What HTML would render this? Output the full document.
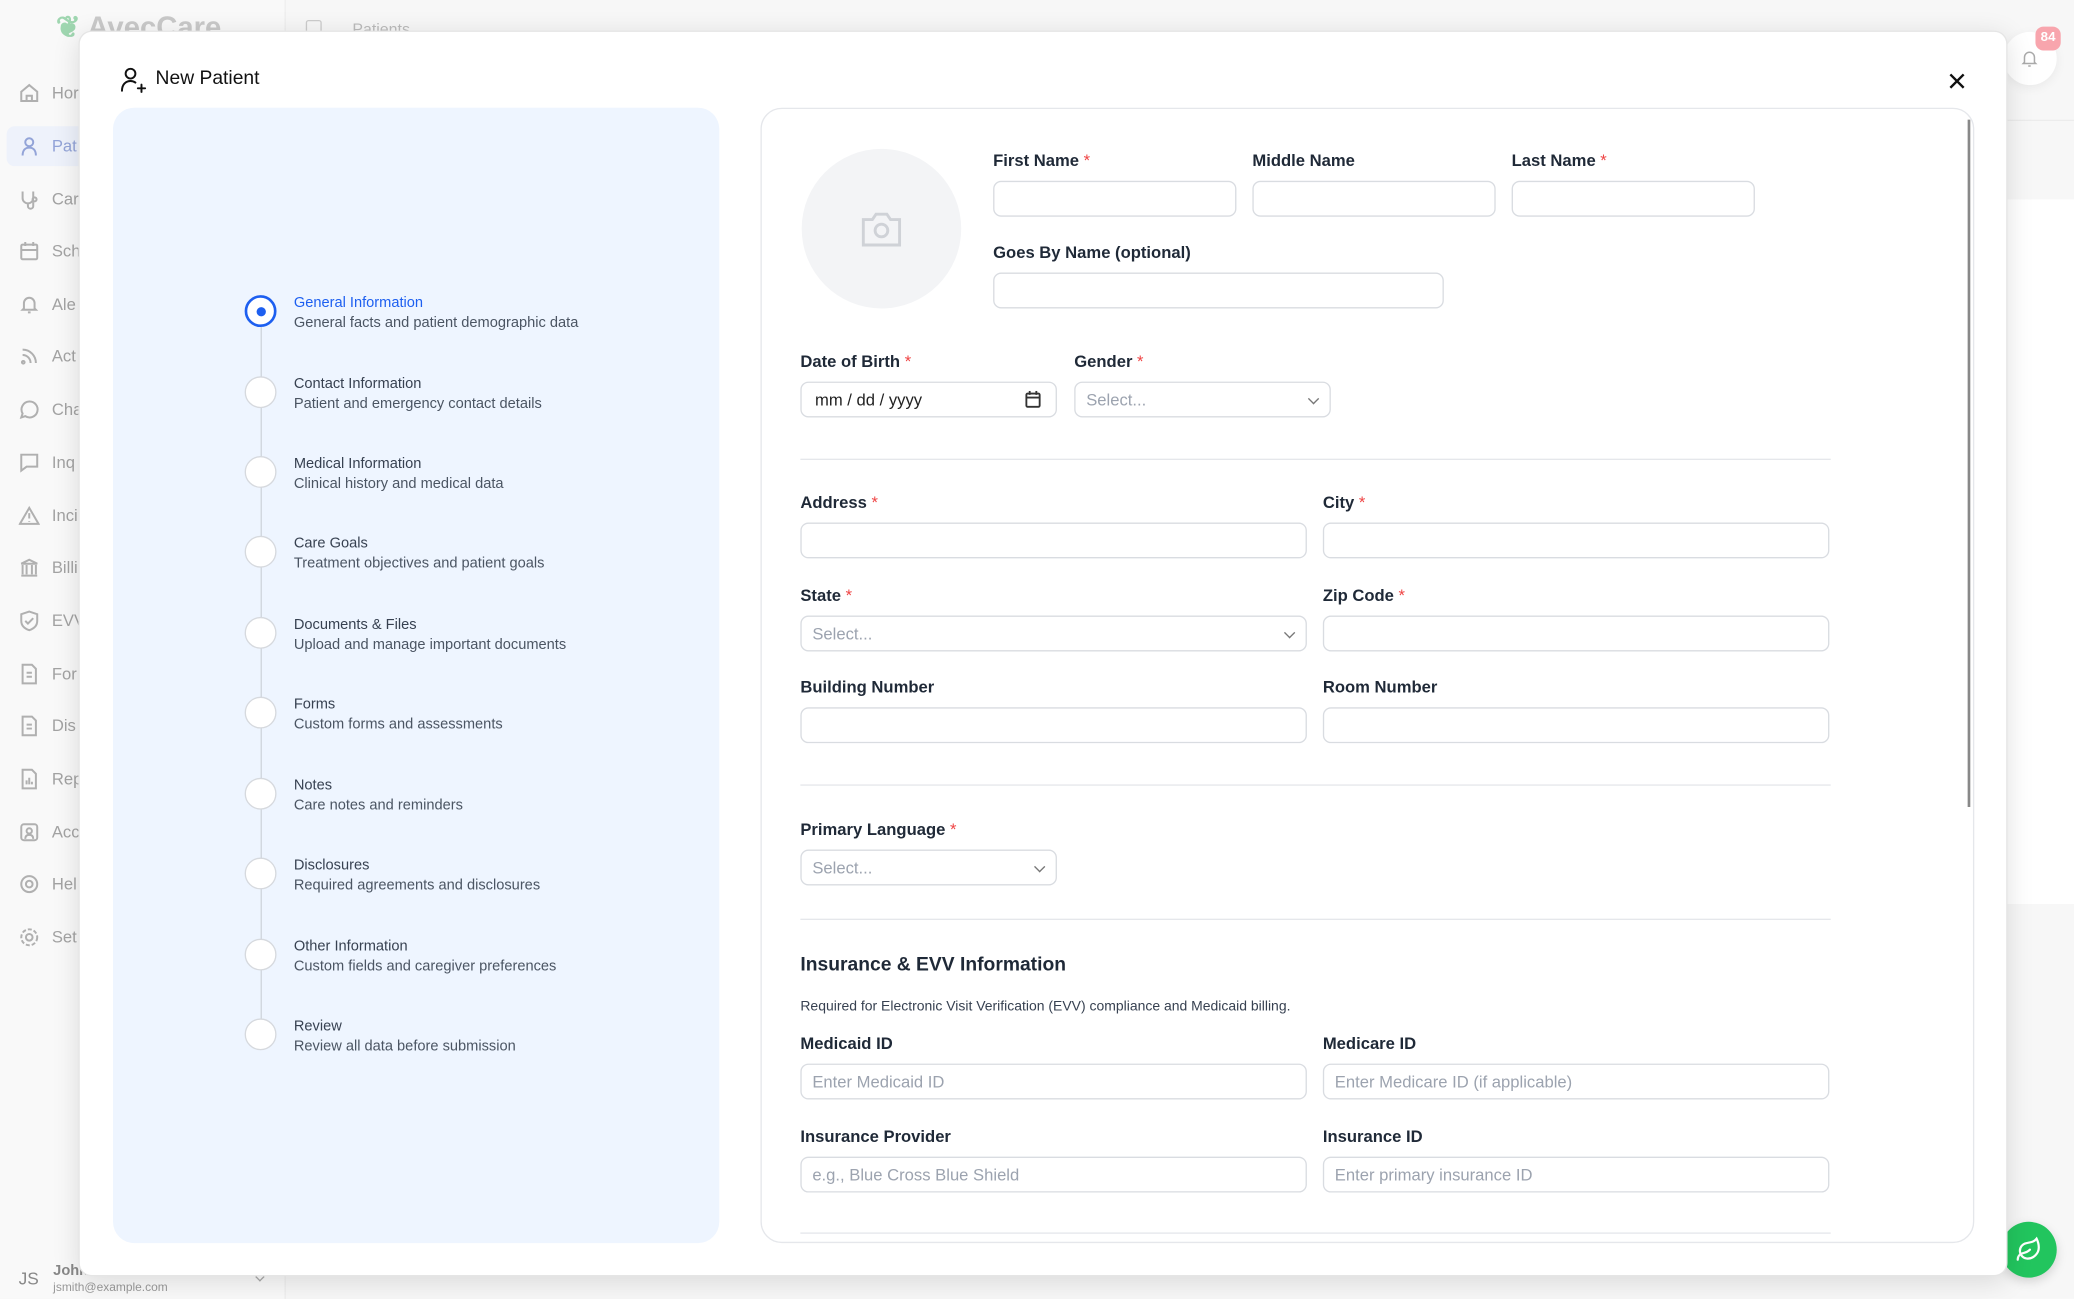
<!DOCTYPE html>
<html><head><meta charset="utf-8"><style>
*{box-sizing:border-box;margin:0;padding:0}
html,body{width:2074px;height:1298px;overflow:hidden;background:#fff}
#s{position:absolute;left:0;top:0;width:1560px;height:977px;transform:scale(1.32949);transform-origin:0 0;font-family:"Liberation Sans",sans-serif;background:#f7f7f7;color:#111}
.a{position:absolute}
.nav{position:absolute;left:14px;font-size:12.5px;color:#a3a3a3;display:flex;align-items:center;gap:9px}
.nav svg{width:16px;height:16px;stroke:#b0b0b0;fill:none;stroke-width:1.5}
.lbl{position:absolute;font-size:12.5px;font-weight:bold;color:#1f2937}
.lbl b{color:#ef4444;font-weight:normal}
.in{position:absolute;height:27px;border:1px solid #d9dce1;border-radius:6px;background:#fff;font-size:12.5px;color:#9ca3af;padding:6px 8px}
.hr{position:absolute;left:602px;width:775px;height:1px;background:#e5e7eb}
.st{position:absolute;left:184px;width:24px;height:24px;border-radius:50%;background:#fff;border:1.5px solid #d6d9de}
.stt{position:absolute;left:221px;font-size:11px;color:#374151;line-height:15px}
.stt span{display:block;color:#4b5563}
.chev{position:absolute;right:9px;top:9px;width:6px;height:6px;border-right:1.2px solid #777;border-bottom:1.2px solid #777;transform:rotate(45deg)}
</style></head><body><div id="s">
<!-- sidebar -->
<div class="a" style="left:0;top:0;width:215px;height:977px;background:#f9f9f9;border-right:1px solid #eee"></div>
<div class="a" style="left:42px;top:8px;font-size:22px;color:#c9c9c9;font-weight:bold"><span style="color:#9fd6b0">❦</span> AvecCare</div>
<div class="a" style="left:230px;top:15px;width:12px;height:12px;border:1.3px solid #ccc;border-radius:2px"></div>
<div class="a" style="left:265px;top:15px;font-size:12px;color:#bbb">Patients</div>
<div class="a" style="left:5px;top:95px;width:60px;height:30px;background:#eef2fb;border-radius:6px"></div>
<div class="nav" style="top:62px"><svg viewBox="0 0 16 16"><path d="M2 7l6-5 6 5v7H2z M6 14v-4h4v4"/></svg>Hor</div>
<div class="nav" style="top:102px;color:#93a4d8"><svg viewBox="0 0 16 16" style="stroke:#93a4d8"><circle cx="8" cy="5" r="3"/><path d="M3 15c0-4 2-6 5-6s5 2 5 6"/></svg>Pat</div>
<div class="nav" style="top:142px"><svg viewBox="0 0 16 16"><path d="M3 2v5a4 4 0 008 0V2M7 11v2a2 2 0 004 0v-3"/><circle cx="12" cy="8" r="1.5"/></svg>Car</div>
<div class="nav" style="top:181px"><svg viewBox="0 0 16 16"><rect x="2" y="3" width="12" height="11" rx="1"/><path d="M2 7h12M5 1v3M11 1v3"/></svg>Sch</div>
<div class="nav" style="top:221px"><svg viewBox="0 0 16 16"><path d="M4 11V7a4 4 0 018 0v4l1 1H3zM7 14h2"/></svg>Ale</div>
<div class="nav" style="top:260px"><svg viewBox="0 0 16 16"><path d="M3 3a10 10 0 0110 10M3 7a6 6 0 016 6"/><circle cx="3.5" cy="12.5" r="1"/></svg>Act</div>
<div class="nav" style="top:300px"><svg viewBox="0 0 16 16"><path d="M8 2a6 6 0 00-5 9l-1 3 3-1a6 6 0 103-11z"/></svg>Cha</div>
<div class="nav" style="top:340px"><svg viewBox="0 0 16 16"><path d="M2 2h12v9H6l-4 3z"/></svg>Inq</div>
<div class="nav" style="top:380px"><svg viewBox="0 0 16 16"><path d="M8 2l7 12H1zM8 6v4M8 12v.5"/></svg>Inci</div>
<div class="nav" style="top:419px"><svg viewBox="0 0 16 16"><path d="M2 5l6-3 6 3zM3 6v7M6 6v7M10 6v7M13 6v7M2 14h12"/></svg>Billi</div>
<div class="nav" style="top:459px"><svg viewBox="0 0 16 16"><path d="M8 1l6 2v5c0 4-3 6-6 7-3-1-6-3-6-7V3zM5 8l2 2 4-4"/></svg>EVV</div>
<div class="nav" style="top:499px"><svg viewBox="0 0 16 16"><path d="M3 1h7l3 3v11H3zM6 7h4M6 10h4"/></svg>For</div>
<div class="nav" style="top:538px"><svg viewBox="0 0 16 16"><path d="M3 1h7l3 3v11H3zM6 7h4M6 10h4"/></svg>Dis</div>
<div class="nav" style="top:578px"><svg viewBox="0 0 16 16"><path d="M3 1h7l3 3v11H3zM6 12V9M8 12V7M10 12v-2"/></svg>Rep</div>
<div class="nav" style="top:618px"><svg viewBox="0 0 16 16"><rect x="2" y="2" width="12" height="12" rx="2"/><circle cx="8" cy="7" r="2"/><path d="M5 13c0-2 1-3 3-3s3 1 3 3"/></svg>Acc</div>
<div class="nav" style="top:657px"><svg viewBox="0 0 16 16"><circle cx="8" cy="8" r="6"/><circle cx="8" cy="8" r="2.5"/></svg>Hel</div>
<div class="nav" style="top:697px"><svg viewBox="0 0 16 16"><circle cx="8" cy="8" r="2.5"/><circle cx="8" cy="8" r="6" stroke-dasharray="3 1.5"/></svg>Set</div>
<div class="a" style="left:14px;top:954px;font-size:13px;color:#888">JS</div>
<div class="a" style="left:40px;top:950px;font-size:11px;color:#888;font-weight:bold">John Smith</div>
<div class="a" style="left:40px;top:963px;font-size:9px;color:#999">jsmith@example.com</div>
<div class="a" style="left:193px;top:958px;width:5px;height:5px;border-right:1px solid #aaa;border-bottom:1px solid #aaa;transform:rotate(45deg)"></div>
<!-- right bg -->
<div class="a" style="left:1510px;top:90px;width:50px;height:1px;background:#ececec"></div>
<div class="a" style="left:1510px;top:150px;width:50px;height:530px;background:#fff"></div>
<div class="a" style="left:1507px;top:24px;width:40px;height:40px;border-radius:50%;background:#fff;box-shadow:0 2px 8px rgba(0,0,0,.06)"></div>
<svg class="a" style="left:1519px;top:36px" width="15" height="16" viewBox="0 0 16 16" fill="none" stroke="#aaa" stroke-width="1.2"><path d="M4 11V7a4 4 0 018 0v4l1 1H3zM7 14h2"/></svg>
<div class="a" style="left:1531px;top:20px;width:19px;height:18px;border-radius:6px;background:#f8a5ad;color:#fff;font-size:10px;font-weight:bold;text-align:center;line-height:18px">84</div>
<div class="a" style="left:1505px;top:919px;width:42px;height:42px;border-radius:50%;background:#22c55e;box-shadow:0 3px 8px rgba(0,0,0,.15)"></div>
<svg class="a" style="left:1516px;top:930px" width="20" height="20" viewBox="0 0 24 24" fill="none" stroke="#fff" stroke-width="2" stroke-linecap="round"><path d="M11 20A7 7 0 019.8 6.1C15.5 5 17 4.5 19 2c1 2 2 4.2 2 8 0 5.5-4.8 10-10 10z"/><path d="M2 21c0-3 1.9-5.4 5.1-6C9.5 14.5 12 13 13 12"/></svg>
<!-- modal -->
<div class="a" style="left:59px;top:23px;width:1451px;height:937px;background:#fff;border-radius:10px;box-shadow:0 4px 20px rgba(0,0,0,.12);border:1px solid #e5e5e5"></div>
<svg class="a" style="left:89px;top:49px" width="22" height="22" viewBox="0 0 24 24" fill="none" stroke="#111" stroke-width="1.6" stroke-linecap="round"><circle cx="10" cy="7" r="4"/><path d="M3 21c0-5 3-8 7-8 2 0 3 .5 4 1.3M19 16v6M16 19h6"/></svg>
<div class="a" style="left:117px;top:51px;font-size:14.5px;color:#111">New Patient</div>
<svg class="a" style="left:1465px;top:54px" width="14" height="14" viewBox="0 0 14 14" stroke="#111" stroke-width="1.8"><path d="M2 2l10 10M12 2L2 12"/></svg>
<!-- left panel -->
<div class="a" style="left:85px;top:81px;width:456px;height:854px;background:#eef5ff;border-radius:16px"></div>
<div class="a" style="left:195.5px;top:246px;width:1px;height:532px;background:#cfd5dd"></div>
<div class="st" style="top:222px;border:2px solid #1d5ff0"><div class="a" style="left:6.5px;top:6.5px;width:7px;height:7px;border-radius:50%;background:#1d5ff0"></div></div>
<div class="stt" style="top:221px;color:#1d5ff0">General Information<span>General facts and patient demographic data</span></div>
<div class="st" style="top:283px"></div><div class="stt" style="top:282px">Contact Information<span>Patient and emergency contact details</span></div>
<div class="st" style="top:343px"></div><div class="stt" style="top:342px">Medical Information<span>Clinical history and medical data</span></div>
<div class="st" style="top:403px"></div><div class="stt" style="top:402px">Care Goals<span>Treatment objectives and patient goals</span></div>
<div class="st" style="top:464px"></div><div class="stt" style="top:463px">Documents &amp; Files<span>Upload and manage important documents</span></div>
<div class="st" style="top:524px"></div><div class="stt" style="top:523px">Forms<span>Custom forms and assessments</span></div>
<div class="st" style="top:585px"></div><div class="stt" style="top:584px">Notes<span>Care notes and reminders</span></div>
<div class="st" style="top:645px"></div><div class="stt" style="top:644px">Disclosures<span>Required agreements and disclosures</span></div>
<div class="st" style="top:706px"></div><div class="stt" style="top:705px">Other Information<span>Custom fields and caregiver preferences</span></div>
<div class="st" style="top:766px"></div><div class="stt" style="top:765px">Review<span>Review all data before submission</span></div>
<!-- right panel -->
<div class="a" style="left:572px;top:81px;width:913px;height:854px;border:1px solid #e5e7eb;border-radius:16px;background:#fff"></div>
<div class="a" style="left:1480px;top:90px;width:2px;height:517px;background:#888"></div>
<div class="a" style="left:603px;top:112px;width:120px;height:120px;border-radius:50%;background:#f3f4f6"></div>
<svg class="a" style="left:646px;top:157px" width="34" height="30" viewBox="0 0 24 22" fill="none" stroke="#cfd2d7" stroke-width="1.6"><path d="M2 6h5l2-3h6l2 3h5v14H2z"/><circle cx="12" cy="12" r="3.5"/></svg>
<div class="lbl" style="left:747px;top:114px">First Name <b>*</b></div>
<div class="lbl" style="left:942px;top:114px">Middle Name</div>
<div class="lbl" style="left:1137px;top:114px">Last Name <b>*</b></div>
<div class="in" style="left:747px;top:136px;width:183px"></div>
<div class="in" style="left:942px;top:136px;width:183px"></div>
<div class="in" style="left:1137px;top:136px;width:183px"></div>
<div class="lbl" style="left:747px;top:183px">Goes By Name (optional)</div>
<div class="in" style="left:747px;top:205px;width:339px"></div>
<div class="lbl" style="left:602px;top:265px">Date of Birth <b>*</b></div>
<div class="lbl" style="left:808px;top:265px">Gender <b>*</b></div>
<div class="in" style="left:602px;top:287px;width:193px;color:#222;padding-left:10px">mm / dd / yyyy
<svg class="a" style="right:11px;top:6px" width="12" height="13" viewBox="0 0 12 13" fill="none" stroke="#333" stroke-width="1.4"><rect x="1" y="2" width="10" height="10" rx="1"/><path d="M1 5h10M3.5 0v3M8.5 0v3"/></svg></div>
<div class="in" style="left:808px;top:287px;width:193px">Select...<div class="chev"></div></div>
<div class="hr" style="top:345px"></div>
<div class="lbl" style="left:602px;top:371px">Address <b>*</b></div>
<div class="lbl" style="left:995px;top:371px">City <b>*</b></div>
<div class="in" style="left:602px;top:393px;width:381px"></div>
<div class="in" style="left:995px;top:393px;width:381px"></div>
<div class="lbl" style="left:602px;top:441px">State <b>*</b></div>
<div class="lbl" style="left:995px;top:441px">Zip Code <b>*</b></div>
<div class="in" style="left:602px;top:463px;width:381px">Select...<div class="chev"></div></div>
<div class="in" style="left:995px;top:463px;width:381px"></div>
<div class="lbl" style="left:602px;top:510px">Building Number</div>
<div class="lbl" style="left:995px;top:510px">Room Number</div>
<div class="in" style="left:602px;top:532px;width:381px"></div>
<div class="in" style="left:995px;top:532px;width:381px"></div>
<div class="hr" style="top:590px"></div>
<div class="lbl" style="left:602px;top:617px">Primary Language <b>*</b></div>
<div class="in" style="left:602px;top:639px;width:193px">Select...<div class="chev"></div></div>
<div class="hr" style="top:691px"></div>
<div class="a" style="left:602px;top:718px;font-size:14.5px;font-weight:bold;color:#1f2937">Insurance &amp; EVV Information</div>
<div class="a" style="left:602px;top:751px;font-size:10.5px;color:#374151">Required for Electronic Visit Verification (EVV) compliance and Medicaid billing.</div>
<div class="lbl" style="left:602px;top:778px">Medicaid ID</div>
<div class="lbl" style="left:995px;top:778px">Medicare ID</div>
<div class="in" style="left:602px;top:800px;width:381px">Enter Medicaid ID</div>
<div class="in" style="left:995px;top:800px;width:381px">Enter Medicare ID (if applicable)</div>
<div class="lbl" style="left:602px;top:848px">Insurance Provider</div>
<div class="lbl" style="left:995px;top:848px">Insurance ID</div>
<div class="in" style="left:602px;top:870px;width:381px">e.g., Blue Cross Blue Shield</div>
<div class="in" style="left:995px;top:870px;width:381px">Enter primary insurance ID</div>
<div class="hr" style="top:927px"></div>
</div></body></html>
